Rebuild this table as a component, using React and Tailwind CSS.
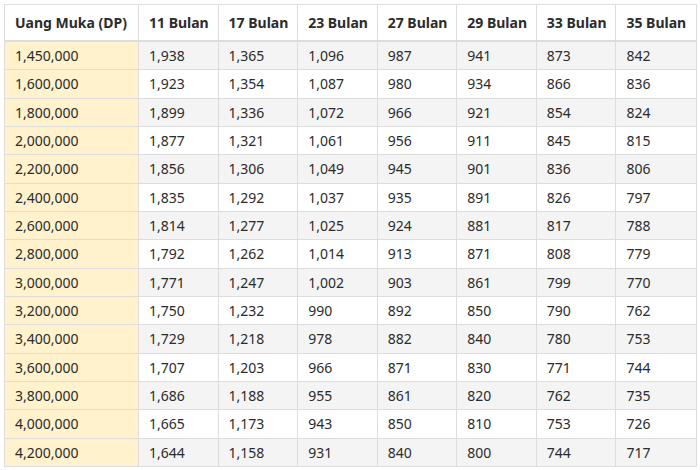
import React from 'react';

const months = ['11 Bulan', '17 Bulan', '23 Bulan', '27 Bulan', '29 Bulan', '33 Bulan', '35 Bulan'];

const rows = [
    ['1,450,000', '1,938', '1,365', '1,096', '987', '941', '873', '842'],
    ['1,600,000', '1,923', '1,354', '1,087', '980', '934', '866', '836'],
    ['1,800,000', '1,899', '1,336', '1,072', '966', '921', '854', '824'],
    ['2,000,000', '1,877', '1,321', '1,061', '956', '911', '845', '815'],
    ['2,200,000', '1,856', '1,306', '1,049', '945', '901', '836', '806'],
    ['2,400,000', '1,835', '1,292', '1,037', '935', '891', '826', '797'],
    ['2,600,000', '1,814', '1,277', '1,025', '924', '881', '817', '788'],
    ['2,800,000', '1,792', '1,262', '1,014', '913', '871', '808', '779'],
    ['3,000,000', '1,771', '1,247', '1,002', '903', '861', '799', '770'],
    ['3,200,000', '1,750', '1,232', '990', '892', '850', '790', '762'],
    ['3,400,000', '1,729', '1,218', '978', '882', '840', '780', '753'],
    ['3,600,000', '1,707', '1,203', '966', '871', '830', '771', '744'],
    ['3,800,000', '1,686', '1,188', '955', '861', '820', '762', '735'],
    ['4,000,000', '1,665', '1,173', '943', '850', '810', '753', '726'],
    ['4,200,000', '1,644', '1,158', '931', '840', '800', '744', '717'],
];

const grid = 'grid grid-cols-[134px_repeat(7,minmax(0,1fr))]';

export default function App() {
    return (
        <div className="w-[700px] h-[470px] bg-white pt-[4px] pl-[4px] text-[14px] text-[#2b2b2b]" style={{ fontFamily: '"Noto Sans", "Open Sans", sans-serif' }}>
            <div className="w-[693px] border-l border-t border-r border-[#dddddd]">
                {/* header */}
                <div className={`${grid} h-[37px] border-b-2 border-[#dddddd] font-bold`}>
                    <div className="flex items-center px-[10px] whitespace-nowrap border-r border-[#dddddd]">Uang Muka (DP)</div>
                    {months.map((m, i) => (
                        <div key={m} className={`flex items-center pl-[10px] whitespace-nowrap ${i < 6 ? 'border-r border-[#dddddd]' : ''}`}>{m}</div>
                    ))}
                </div>
                {rows.map((r, ri) => (
                    <div key={r[0]} className={`${grid} h-[28.33px] border-b border-[#dddddd] ${ri % 2 === 0 ? 'bg-[#f4f4f4]' : 'bg-white'}`}>
                        {r.map((v, ci) => (
                            <div
                                key={ci}
                                className={`flex items-center px-[10px] ${ci === 0 ? 'bg-[#fff2cc]' : ''} ${ci < 7 ? 'border-r border-[#dddddd]' : ''}`}
                            >
                                {v}
                            </div>
                        ))}
                    </div>
                ))}
            </div>
        </div>
    );
}
